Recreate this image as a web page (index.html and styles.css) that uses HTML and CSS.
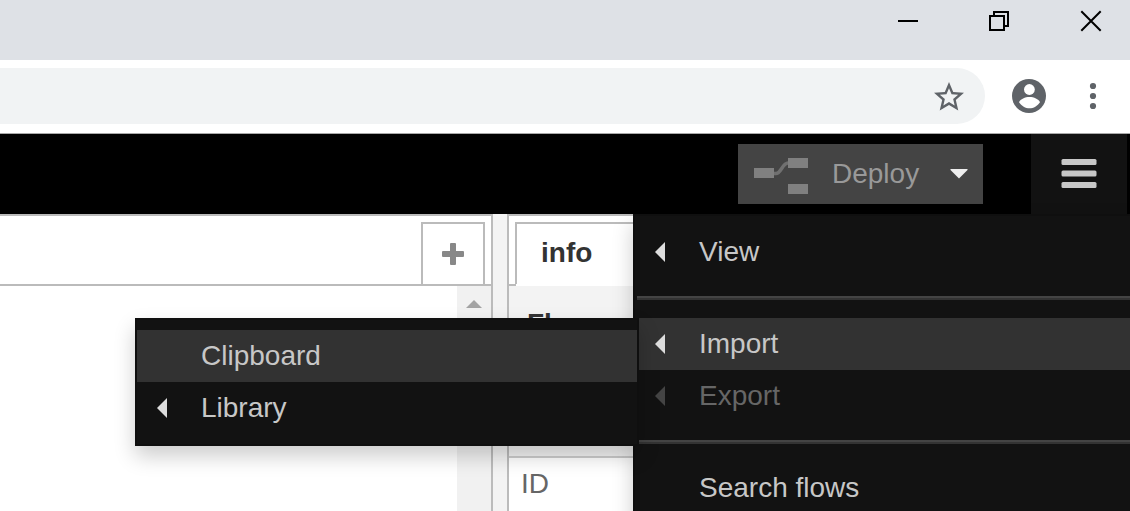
FILE: index.html
```html
<!DOCTYPE html>
<html lang="en">
<head>
<meta charset="utf-8">
<title>Flow editor</title>
<link rel="stylesheet" href="styles.css">
</head>
<body>
<div class="window">
  <div class="titlebar">
    <svg class="window-controls" width="210" height="40" viewBox="0 0 210 40" fill="none" stroke="#000" stroke-width="2">
      <path d="M18 21H38"/>
      <path d="M110 16H124V30H110ZM114 16V12H128V26H124"/>
      <path d="M201.300 11.300L220.700 30.700M220.700 11.300L201.300 30.700"/>
    </svg>
  </div>
  <div class="toolbar">
    <div class="address">
      <svg class="star" width="36" height="36" viewBox="0 0 24 24" fill="#5f6368"><path d="M22 9.24l-7.19-.62L12 2 9.19 8.63 2 9.24l5.46 4.73L5.82 21 12 17.27 18.18 21l-1.63-7.03L22 9.24zM12 15.4l-3.76 2.27 1-4.28-3.32-2.88 4.38-.38L12 6.1l1.71 4.04 4.38.38-3.32 2.88 1 4.28L12 15.4z"/></svg>
    </div>
    <svg class="profile" width="34" height="34" viewBox="0 0 34 34"><circle cx="17" cy="17" r="17" fill="#5f6368"/><circle cx="17.400" cy="10.500" r="5.400" fill="#fff"/><path d="M7 23.200C8.500 20 13 18 17.500 18S26.500 20 28 23.200C25.500 27 21.500 29.300 17.500 29.300S9.500 27 7 23.200Z" fill="#fff"/></svg>
    <svg class="dots" width="8" height="28" viewBox="0 0 8 28" fill="#5f6368"><circle cx="4" cy="4" r="3.100"/><circle cx="4" cy="14" r="3.100"/><circle cx="4" cy="24" r="3.100"/></svg>
  </div>
  <div class="header">
    <div class="deploy">
      <svg width="54" height="36" viewBox="0 0 54 36"><path d="M19 15.500H22C27 15.500 28.500 5 34 5H36" fill="none" stroke="#707070" stroke-width="3.500"/><path d="M0 10H20V20H0ZM34 0H54V10H34ZM34 26H54V36H34Z" fill="#808080"/></svg>
      <span class="deploy-label">Deploy</span>
      <svg class="caret" width="18" height="10" viewBox="0 0 18 10"><path d="M.5 0H17.500V1L9 9.500L.5 1Z" fill="#eee"/></svg>
    </div>
    <div class="menu-button">
      <svg width="36" height="30" viewBox="0 0 36 30" fill="#c7c7c7"><rect x=".5" width="35" height="6" rx="1.500"/><rect x=".5" y="11.500" width="35" height="6" rx="1.500"/><rect x=".5" y="23" width="35" height="6" rx="1.500"/></svg>
    </div>
  </div>
  <div class="main">
    <div class="workspace">
      <div class="tabs"><div class="add-tab"><svg width="22" height="22" viewBox="0 0 22 22"><path d="M8 1Q8 0 9 0H13Q14 0 14 1V8H21Q22 8 22 9V13Q22 14 21 14H14V21Q14 22 13 22H9Q8 22 8 21V14H1Q0 14 0 13V9Q0 8 1 8H8Z" fill="#888"/></svg></div></div>
      <div class="canvas"><div class="scrollbar"><svg width="16" height="8" viewBox="0 0 16 8"><path d="M0 8L8 0L16 8Z" fill="#a3a3a3"/></svg></div></div>
    </div>
    <div class="separator"></div>
    <div class="sidebar">
      <div class="side-tabs"><div class="info-tab">info</div></div>
      <div class="section">Flow</div>
      <div class="property">ID</div>
    </div>
  </div>
  <div class="menu">
    <div class="item"><i class="arrow"></i>View</div>
    <div class="divider"></div>
    <div class="item selected"><i class="arrow"></i>Import</div>
    <div class="item disabled"><i class="arrow"></i>Export</div>
    <div class="divider"></div>
    <div class="item">Search flows</div>
  </div>
  <div class="submenu">
    <div class="item selected">Clipboard</div>
    <div class="item"><i class="arrow"></i>Library</div>
  </div>
</div>
</body>
</html>
```
FILE: styles.css
```css
* { box-sizing: border-box; }
body { margin: 0; overflow: hidden; font: 28px/40px "Liberation Sans", Arial, sans-serif; }
.window { position: relative; width: 1130px; height: 511px; overflow: hidden; display: flex; flex-direction: column; background: #fff; }
svg { display: block; flex: none; }
.titlebar { height: 60px; flex: none; background: #dee1e6; display: flex; justify-content: flex-end; padding-right: 40px; }
.window-controls { overflow: visible; }
.toolbar { height: 74px; flex: none; display: flex; align-items: center; padding-bottom: 1px; border-bottom: 1px solid #a9a9a9; }
.address { width: 985px; height: 56px; border-radius: 0 28px 28px 0; background: #f1f3f4; display: flex; align-items: center; justify-content: flex-end; padding-right: 18px; }
.star { margin-top: 1px; }
.profile { margin-left: 27px; }
.dots { margin-left: 43px; }
.header { height: 80px; flex: none; background: #000; display: flex; justify-content: flex-end; align-items: center; padding-right: 3px; }
.deploy { width: 245px; height: 60px; margin-right: 48px; background: #444; display: flex; align-items: center; padding: 3px 0 0 16px; color: #999; }
.deploy-label { margin-left: 24px; width: 87px; margin-top: -3px; }
.caret { margin-left: 31px; margin-top: -4px; }
.menu-button { width: 96px; height: 80px; background: #121212; display: flex; justify-content: center; padding-top: 25px; }
.main { flex: 1; min-height: 0; display: flex; }
.workspace { width: 493px; border-top: 2px solid #bbb; border-right: 2px solid #bbb; display: flex; flex-direction: column; }
.tabs { height: 70px; flex: none; border-bottom: 2px solid #bbb; display: flex; justify-content: flex-end; padding: 6px 6px 0 0; }
.add-tab { width: 64px; height: 62px; border: 2px solid #bbb; border-bottom: 0; display: flex; justify-content: center; padding-top: 19px; }
.canvas { flex: 1; display: flex; justify-content: flex-end; }
.scrollbar { width: 34px; background: #f1f1f1; display: flex; justify-content: center; padding-top: 14px; }
.separator { width: 14px; background: #f3f3f3; }
.sidebar { flex: 1; border-top: 2px solid #bbb; border-left: 2px solid #bbb; color: #666; }
.side-tabs { height: 70px; padding: 6px 0 0 6px; background: linear-gradient(#bbb, #bbb) 0 68px / 7px 2px no-repeat; }
.info-tab { height: 62px; border: 2px solid #bbb; border-bottom: 0; background: #fff; padding: 9px 24px; color: #333; font-weight: bold; }
.section { height: 172px; border-bottom: 2px solid #ccc; background: #f3f3f3; padding: 18px; color: #333; font-weight: bold; }
.property { padding: 6px 12px; }
.menu, .submenu { position: absolute; background: #121212; border: 2px solid #0f0f0f; color: #c7c7c7; box-shadow: 0 10px 20px rgba(0, 0, 0, .2); }
.menu { left: 633px; top: 214px; width: 520px; height: 320px; padding-top: 10px; }
.submenu { left: 135px; top: 318px; width: 504px; height: 128px; padding-top: 10px; }
.item { position: relative; height: 52px; line-height: 52px; padding-left: 64px; white-space: nowrap; }
.selected { background: #323232; }
.disabled { color: #666; }
.divider { height: 4px; margin: 18px 2px; background: #333; border-top: 2px solid #444; }
.arrow { position: absolute; left: 20px; top: 16px; border: solid transparent; border-width: 10px 10px 10px 0; border-right-color: #ddd; }
.disabled .arrow { border-right-color: #444; }
```
